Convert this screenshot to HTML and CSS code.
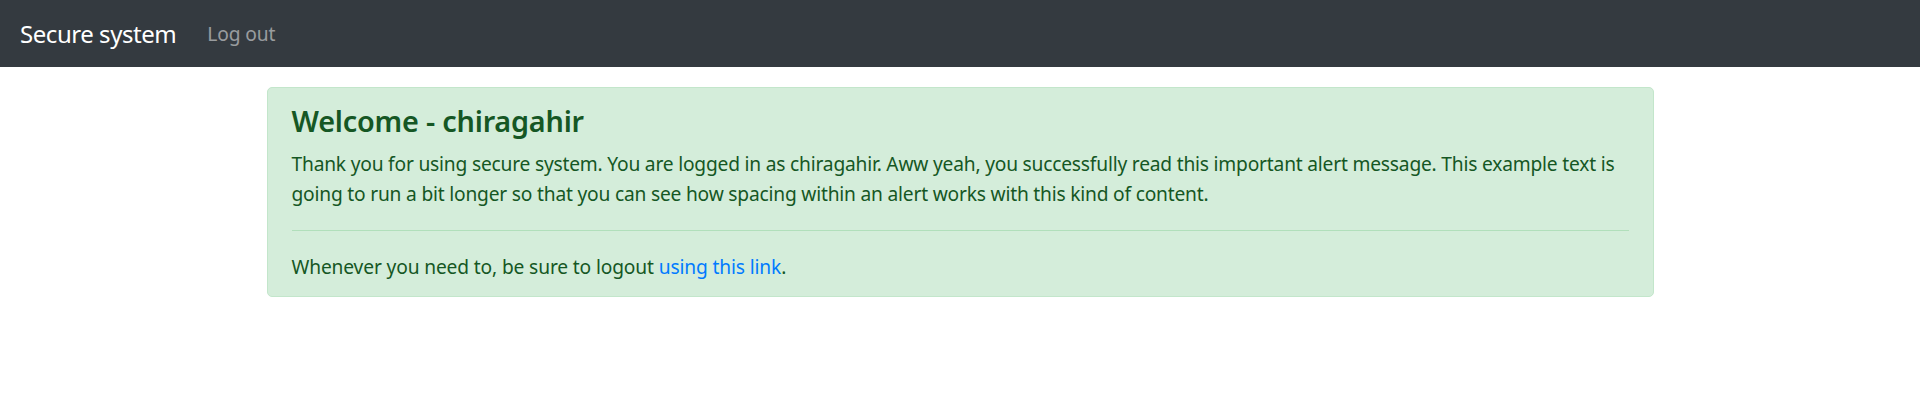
FILE: index.html
```html
<!DOCTYPE html>
<html lang="en">
<head>
<meta charset="utf-8">
<title>Secure system</title>
<link rel="stylesheet" href="styles.css">
</head>
<body>
<nav class="navbar">
  <a class="brand" href="#">Secure system</a>
  <a class="nav-link" href="#">Log out</a>
</nav>
<main class="container">
  <div class="alert">
    <h4 class="alert-heading">Welcome - chiragahir</h4>
    <p class="alert-text">Thank you for using secure system. You are logged in as chiragahir. Aww yeah, you successfully read this important alert message. This example text is going to run a bit longer so that you can see how spacing within an alert works with this kind of content.</p>
    <hr class="divider">
    <p class="alert-footer">Whenever you need to, be sure to logout <a class="link" href="#">using this link</a>.</p>
  </div>
</main>
</body>
</html>
```
FILE: styles.css
```css
* { box-sizing: border-box; }
html, body { margin: 0; padding: 0; background: #fff; }
body {
  font-family: "Noto Sans", "Open Sans", sans-serif;
  font-size: 19.2px;
  line-height: 1.5;
  color: #212529;
}
a { text-decoration: none; }

.navbar {
  height: 67px;
  background: #343a40;
  display: flex;
  align-items: center;
  padding: 0 20px;
}
.brand {
  color: #fff;
  font-size: 24px;
  line-height: 36px;
  letter-spacing: -0.45px;
  margin-right: 22px;
}
.nav-link {
  color: rgba(255,255,255,.5);
  font-size: 19.2px;
  line-height: 29px;
  letter-spacing: -0.1px;
  padding: 0 9px;
}

.container {
  width: 1387px;
  margin: 20px auto 0;
}
.alert {
  background: #d4edda;
  border: 1px solid #c3e6cb;
  border-radius: 5px;
  color: #155724;
  padding: 14px 24px;
}
.alert-heading {
  margin: 2px 0 10px;
  font-size: 28.8px;
  line-height: 34.5px;
  font-weight: 600;
  letter-spacing: -0.2px;
}
.alert-text {
  margin: 0;
  line-height: 30px;
  letter-spacing: -0.2px;
}
.divider {
  border: 0;
  border-top: 1px solid #b1dfbb;
  margin: 21px 0;
}
.alert-footer {
  margin: 0;
  line-height: 30px;
  letter-spacing: -0.14px;
}
.link { color: #007bff; }
```
